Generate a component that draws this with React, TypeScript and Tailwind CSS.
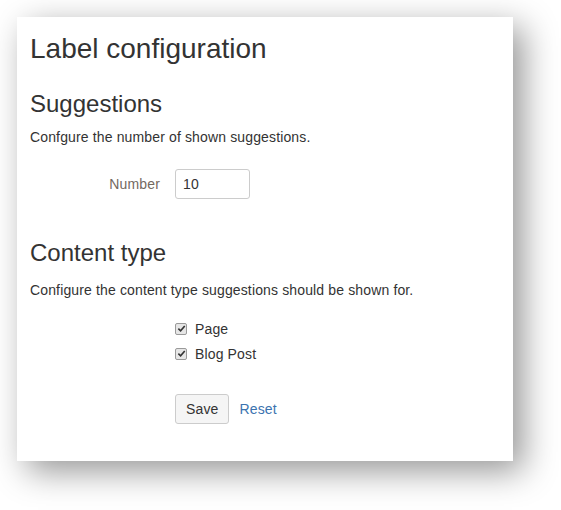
import React from "react";

function Check({ label }: { label: string }) {
  return (
    <div className="flex h-[25px] items-center">
      <span className="flex h-[12px] w-[12px] items-center justify-center rounded-[2px] border border-[#9a9a9a] bg-[#e6e6e6]">
        <svg viewBox="0 0 10 10" className="h-[9px] w-[9px]">
          <path d="M1.5 5.2 L4 7.6 L8.6 2.2" fill="none" stroke="#333" strokeWidth="1.8" />
        </svg>
      </span>
      <span className="ml-[8px] text-[14px] leading-[20px] tracking-[0.14px] text-[#333]">{label}</span>
    </div>
  );
}

export default function App() {
  return (
    <div className="h-[510px] w-[561px] bg-white pl-[17px] pt-[17px] font-['Liberation_Sans',Arial,sans-serif]">
      <div className="h-[444px] w-[496px] bg-white px-[13px] pt-[15px] shadow-[10px_10px_32px_rgba(0,0,0,0.42)]">
        <h1 className="text-[28px] leading-[34px] text-[#333]">Label configuration</h1>
        <h2 className="mt-[23px] text-[24px] leading-[29px] text-[#333]">Suggestions</h2>
        <p className="mt-[9px] text-[14px] leading-[20px] tracking-[0.14px] text-[#333]">Confgure the number of shown suggestions.</p>
        <div className="mt-[22px] flex items-center">
          <label className="w-[130px] text-right text-[14px] leading-[20px] tracking-[0.14px] text-[#74695f]">Number</label>
          <input
            defaultValue="10"
            className="ml-[15px] h-[30px] w-[75px] rounded-[3px] border border-[#cccccc] px-[7px] text-[14px] tracking-[0.14px] text-[#333] outline-none"
          />
        </div>
        <h2 className="mt-[39px] text-[24px] leading-[29px] text-[#333]">Content type</h2>
        <p className="mt-[13px] text-[14px] leading-[20px] tracking-[0.14px] text-[#333]">Configure the content type suggestions should be shown for.</p>
        <div className="ml-[145px] mt-[16px]">
          <Check label="Page" />
          <Check label="Blog Post" />
        </div>
        <div className="ml-[145px] mt-[28px] flex items-center">
          <button className="h-[30px] rounded-[3px] border border-[#cccccc] bg-[#f5f5f5] px-[10px] text-[14px] tracking-[0.14px] text-[#333]">Save</button>
          <a className="ml-[10px] text-[14px] tracking-[0.14px] text-[#3b73af]">Reset</a>
        </div>
      </div>
    </div>
  );
}
